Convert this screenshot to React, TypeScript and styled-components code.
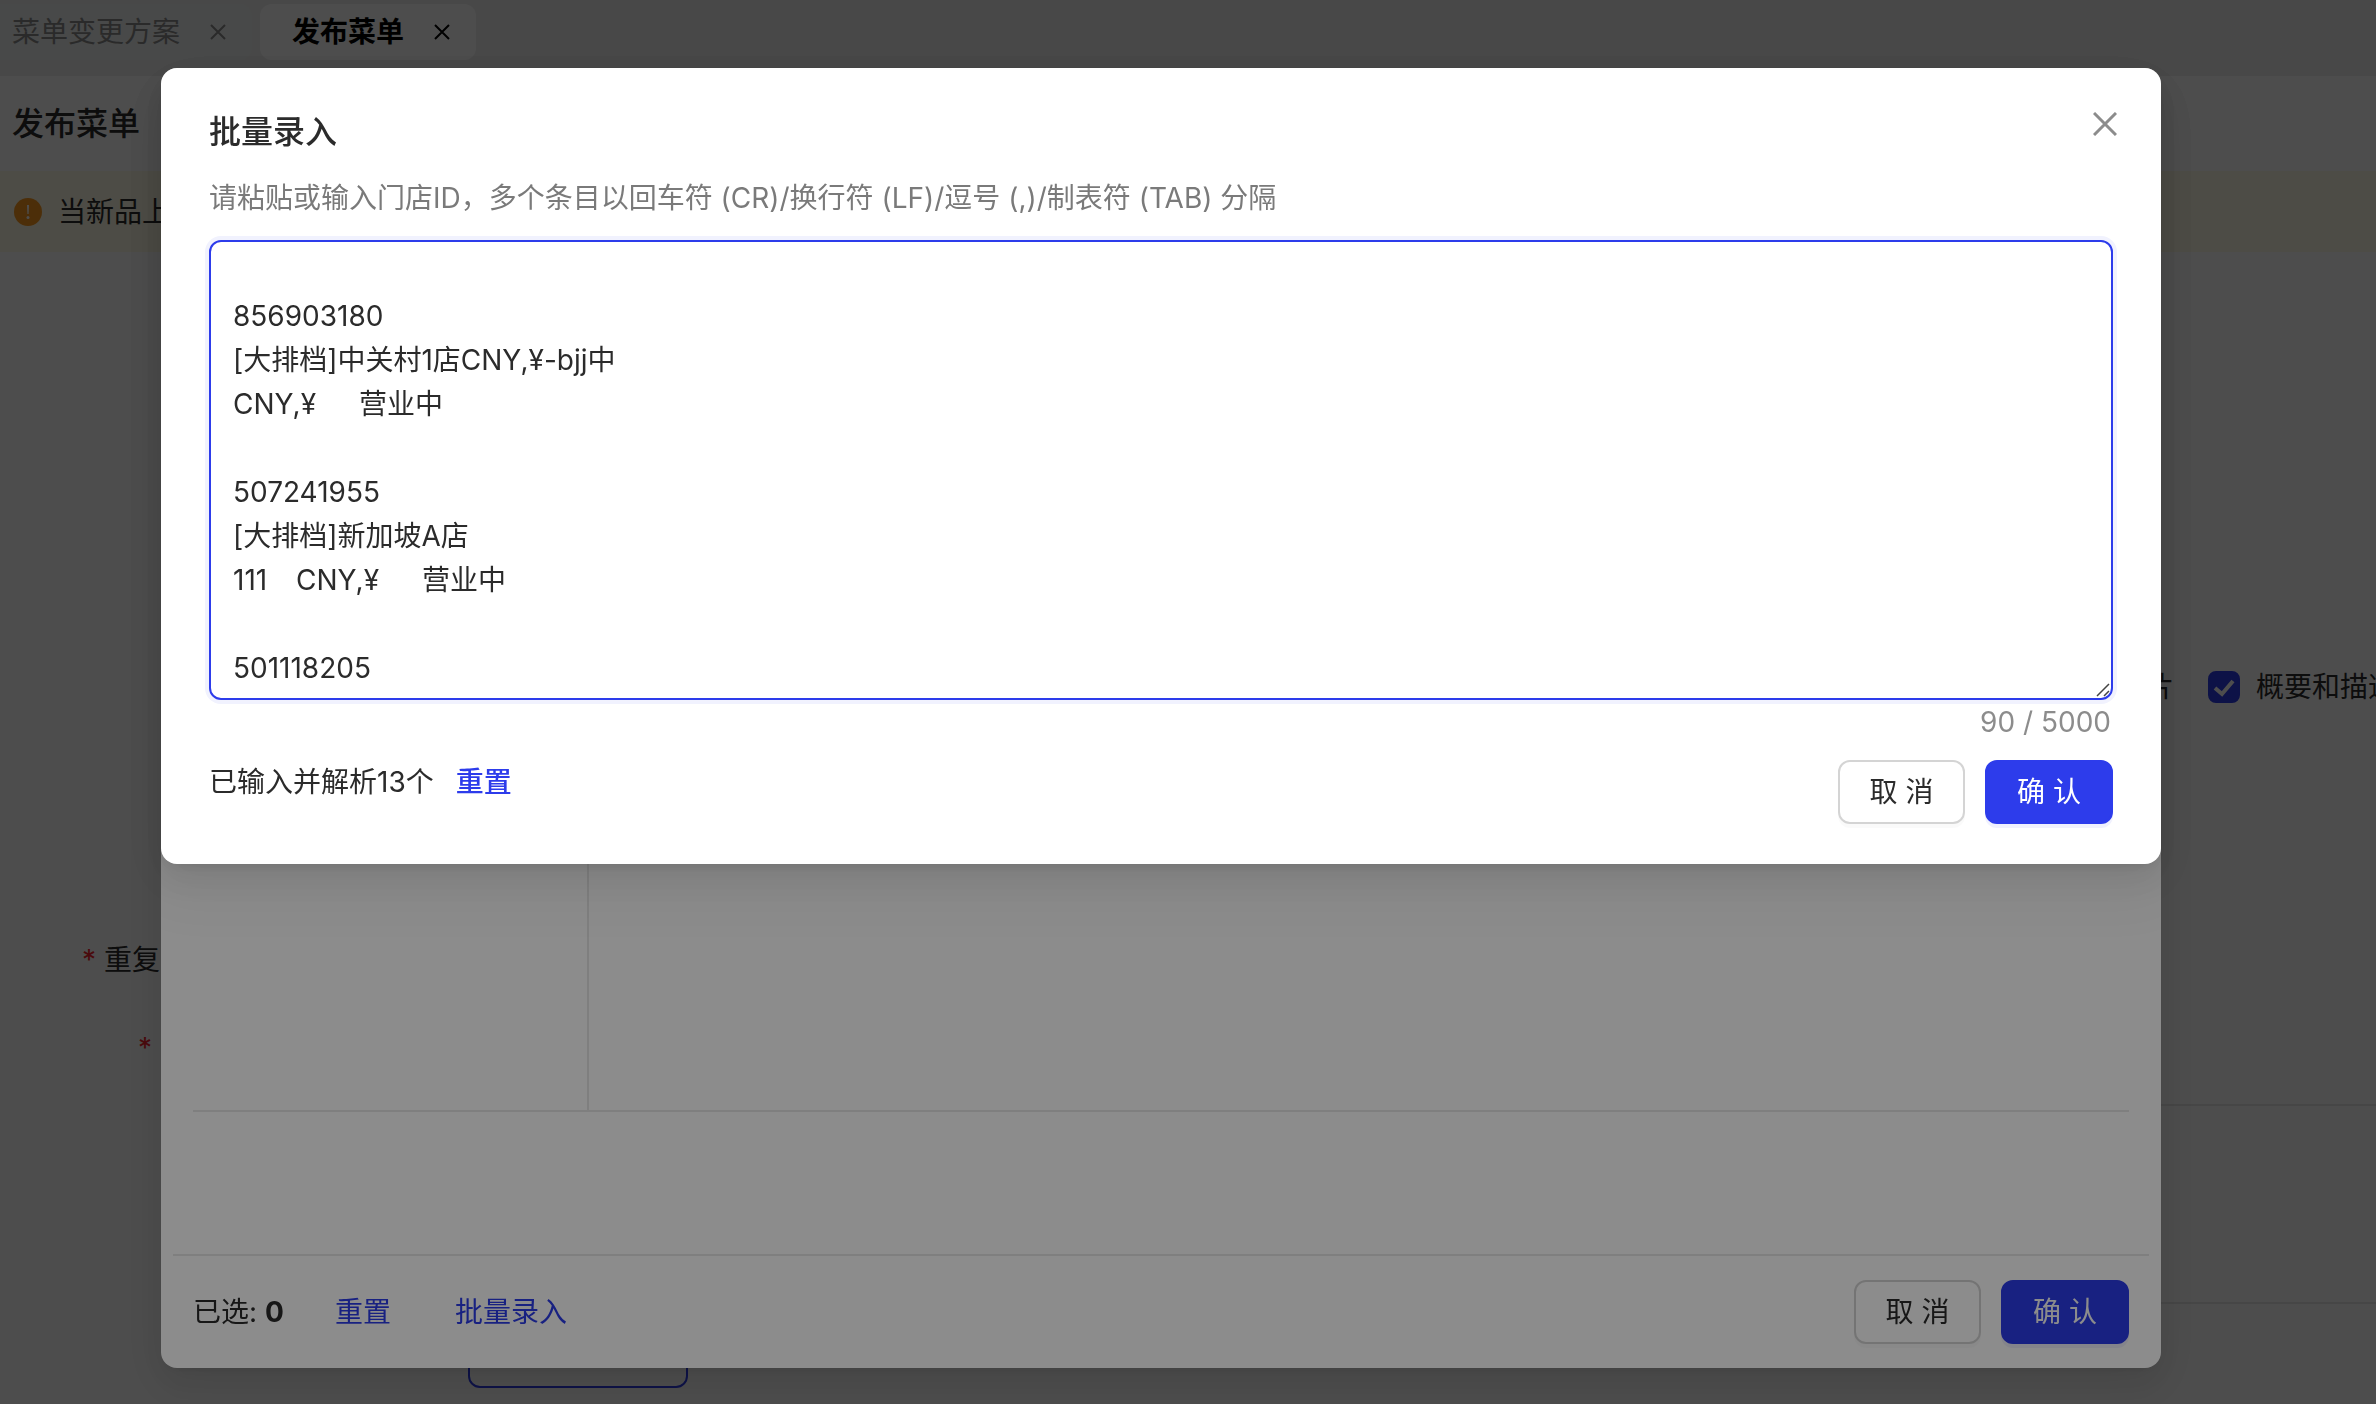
import React, { useState } from "react";
import styled, { createGlobalStyle } from "styled-components";

const BLUE = "#2d3ceb";
const INK = "#2b2b2b";
const LINE = "#e8e8e8";
const MASK = "rgba(0, 0, 0, 0.45)";
const SHADOW =
  "0 12px 32px 0 rgba(0, 0, 0, 0.08), 0 6px 12px -8px rgba(0, 0, 0, 0.12), 0 18px 56px 16px rgba(0, 0, 0, 0.05)";

const GlobalStyle = createGlobalStyle`
  *, *::before, *::after { box-sizing: border-box; }
  body {
    margin: 0;
    color: ${INK};
    background: #fff;
    font: 400 28px/44px Inter, "Noto Sans CJK SC", sans-serif;
  }
  button, textarea { font: inherit; color: inherit; }
`;

/* ---------- page behind the dialogs ---------- */

const Page = styled.div`
  height: 100vh;
  overflow: hidden;
`;

const TabBar = styled.nav`
  display: flex;
  gap: 8px;
  padding: 4px 0 16px;
  background: #efefef;
`;

const Tab = styled.div<{ $active?: boolean }>`
  display: flex;
  align-items: center;
  gap: 30px;
  height: 56px;
  padding: 0 26px 0 ${(p) => (p.$active ? 32 : 12)}px;
  border-radius: ${(p) => (p.$active ? "12px" : "0 12px 12px 0")};
  background: ${(p) => (p.$active ? "#fff" : "#eef1f0")};
  color: ${(p) => (p.$active ? "#000" : "#8c8c8c")};
  font-weight: ${(p) => (p.$active ? 600 : 400)};
`;

const TabClose = styled.button`
  display: flex;
  padding: 0;
  border: 0;
  background: none;
`;

const PageHead = styled.header`
  display: flex;
  align-items: center;
  height: 95px;
  padding: 0 12px;
`;

const PageTitle = styled.h1`
  margin: 0;
  font-size: 32px;
  line-height: 48px;
  font-weight: 500;
`;

const Notice = styled.div`
  display: flex;
  align-items: center;
  gap: 16px;
  height: 81px;
  padding: 0 14px;
  background: #fffbe6;
`;

const OptionRow = styled.div`
  display: flex;
  justify-content: flex-end;
  gap: 34px;
  height: 652px;
  padding-top: 413px;
  margin-right: -20px;
  white-space: nowrap;
`;

const Option = styled.label`
  display: flex;
  align-items: center;
  gap: 16px;
  height: 44px;
`;

const CheckWrap = styled.span`
  position: relative;
  display: flex;
`;

const CheckInput = styled.input`
  appearance: none;
  width: 32px;
  height: 32px;
  margin: 0;
  border: 2px solid #d9d9d9;
  border-radius: 8px;
  background: #fff;
  &:checked {
    border-color: ${BLUE};
    background: ${BLUE};
  }
`;

const CheckMark = styled.svg`
  position: absolute;
  inset: 0;
  pointer-events: none;
`;

const Fields = styled.div`
  height: 200px;
  padding-top: 34px;
`;

const FieldRow = styled.div<{ $indent: number }>`
  display: flex;
  gap: 8px;
  height: 88px;
  padding-left: ${(p) => p.$indent}px;
`;

const Required = styled.span`
  color: #f5222d;
`;

const Band = styled.div`
  height: 200px;
  margin-left: 468px;
  border-top: 2px solid ${LINE};
  border-bottom: 2px solid ${LINE};
`;

const PageActions = styled.div`
  padding: 20px 468px;
`;

const OutlineButton = styled.button`
  width: 220px;
  height: 64px;
  border: 2px solid ${BLUE};
  border-radius: 12px;
  background: #fff;
`;

/* ---------- dialogs ---------- */

const Layer = styled.div`
  position: fixed;
  inset: 0;
  display: flex;
  align-items: flex-start;
  padding: 68px 215px 36px 161px;
  background: ${MASK};
`;

const Dialog = styled.section`
  position: relative;
  display: flex;
  flex-direction: column;
  flex: 1;
  border-radius: 16px;
  background: #fff;
  box-shadow: ${SHADOW};
`;

const PickerDialog = styled(Dialog)`
  align-self: stretch;
`;

const PickerBody = styled.div`
  display: flex;
  flex: 1;
  margin: 0 32px;
  border-bottom: 2px solid ${LINE};
`;

const PickerSide = styled.div`
  width: 396px;
  border-right: 2px solid ${LINE};
`;

const PickerSummary = styled.div`
  height: 144px;
  margin: 0 12px;
  border-bottom: 2px solid ${LINE};
`;

const PickerFooter = styled.footer`
  display: flex;
  align-items: center;
  justify-content: space-between;
  height: 112px;
  padding: 0 32px;
`;

const PickerInfo = styled.div`
  display: flex;
  align-items: center;
`;

const Selected = styled.span`
  width: 142px;
  strong { font-weight: 700; }
`;

const LinkButton = styled.button<{ $strong?: boolean }>`
  padding: 0;
  border: 0;
  background: none;
  color: ${BLUE};
  font-weight: ${(p) => (p.$strong ? 500 : 400)};
  cursor: pointer;
`;

const PickerLinks = styled.div`
  display: flex;
  gap: 64px;
`;

const Actions = styled.div`
  display: flex;
  gap: 20px;
`;

const Button = styled.button<{ $primary?: boolean }>`
  width: ${(p) => (p.$primary ? 128 : 127)}px;
  height: 64px;
  padding: 0;
  border: 2px solid ${(p) => (p.$primary ? BLUE : "#d4d4d4")};
  border-radius: 12px;
  background: ${(p) => (p.$primary ? BLUE : "#fff")};
  color: ${(p) => (p.$primary ? "#fff" : INK)};
  box-shadow: 0 4px 0 ${(p) => (p.$primary ? "rgba(45, 60, 235, 0.07)" : "rgba(0, 0, 0, 0.02)")};
  cursor: pointer;
`;

const EntryDialog = styled(Dialog)`
  padding: 40px 48px;
`;

const EntryTitle = styled.h2`
  margin: 0 0 20px;
  font-size: 32px;
  line-height: 48px;
  font-weight: 500;
`;

const CloseButton = styled.button`
  position: absolute;
  top: 44px;
  right: 44px;
  display: flex;
  padding: 0;
  border: 0;
  background: none;
  color: #8c8c8c;
  cursor: pointer;
`;

const Hint = styled.label`
  margin-bottom: 20px;
  color: #7a7a7a;
`;

const EntryBox = styled.textarea`
  display: block;
  width: 100%;
  height: 460px;
  padding: 8px 22px;
  border: 2px solid ${BLUE};
  border-radius: 12px;
  outline: none;
  overflow: hidden;
  resize: none;
  background: #fff;
  box-shadow: 0 0 0 4px #f1f2fe;
  white-space: pre-wrap;
`;

const BoxFrame = styled.div`
  position: relative;
`;

const Grip = styled.svg`
  position: absolute;
  right: 3px;
  bottom: 3px;
  pointer-events: none;
`;

const Count = styled.div`
  height: 60px;
  padding-right: 2px;
  text-align: right;
  color: #8c8c8c;
`;

const EntryFooter = styled.footer`
  display: flex;
  align-items: flex-start;
  justify-content: space-between;
`;

const Parsed = styled.div`
  display: flex;
  gap: 22px;
`;

const Cross = ({ size, stroke }: { size: number; stroke: number }) => (
  <svg width={size} height={size} viewBox={`0 0 ${size} ${size}`} fill="none" aria-hidden="true">
    <path
      d={`M1 1 L${size - 1} ${size - 1} M${size - 1} 1 L1 ${size - 1}`}
      stroke="currentColor"
      strokeWidth={stroke}
    />
  </svg>
);

const WarnIcon = () => (
  <svg width="28" height="28" viewBox="0 0 28 28" aria-hidden="true">
    <circle cx="14" cy="14" r="14" fill="#fa991e" />
    <path d="M13 7h2l-.4 9h-1.2z" fill="#fff" />
    <circle cx="14" cy="19.5" r="1.5" fill="#fff" />
  </svg>
);

const TABS = [
  { name: "菜单变更方案", active: false },
  { name: "发布菜单", active: true },
];

const STORE_TEXT = [
  "",
  "856903180",
  "[大排档]中关村1店CNY,¥-bjj中",
  "CNY,¥\t营业中",
  "",
  "507241955",
  "[大排档]新加坡A店",
  "111\tCNY,¥\t营业中",
  "",
  "501118205",
].join("\n");

export default function App() {
  const [text, setText] = useState(STORE_TEXT);

  return (
    <>
      <GlobalStyle />
      <Page>
        <TabBar>
          {TABS.map((t) => (
            <Tab key={t.name} $active={t.active}>
              {t.name}
              <TabClose aria-label={`关闭${t.name}`}>
                <Cross size={16} stroke={2} />
              </TabClose>
            </Tab>
          ))}
        </TabBar>
        <PageHead>
          <PageTitle>发布菜单</PageTitle>
        </PageHead>
        <Notice>
          <WarnIcon />
          <span>当新品上</span>
        </Notice>
        <OptionRow>
          <span>片</span>
          <Option>
            <CheckWrap>
              <CheckInput type="checkbox" defaultChecked />
              <CheckMark width="32" height="32" viewBox="0 0 32 32" fill="none">
                <path d="M7 17 L14 23 L25 10" stroke="#fff" strokeWidth="4" />
              </CheckMark>
            </CheckWrap>
            概要和描述
          </Option>
        </OptionRow>
        <Fields>
          <FieldRow $indent={82}>
            <Required>*</Required>
            <span>重复</span>
          </FieldRow>
          <FieldRow $indent={138}>
            <Required>*</Required>
          </FieldRow>
        </Fields>
        <Band />
        <PageActions>
          <OutlineButton aria-label="发布" />
        </PageActions>
      </Page>

      <Layer>
        <PickerDialog>
          <PickerBody>
            <PickerSide />
          </PickerBody>
          <PickerSummary />
          <PickerFooter>
            <PickerInfo>
              <Selected>
                已选: <strong>0</strong>
              </Selected>
              <PickerLinks>
                <LinkButton>重置</LinkButton>
                <LinkButton>批量录入</LinkButton>
              </PickerLinks>
            </PickerInfo>
            <Actions>
              <Button>取 消</Button>
              <Button $primary>确 认</Button>
            </Actions>
          </PickerFooter>
        </PickerDialog>
      </Layer>

      <Layer>
        <EntryDialog role="dialog" aria-labelledby="entry-title">
          <EntryTitle id="entry-title">批量录入</EntryTitle>
          <CloseButton aria-label="关闭">
            <Cross size={24} stroke={3} />
          </CloseButton>
          <Hint htmlFor="entry-box">
            请粘贴或输入门店ID，多个条目以回车符 (CR)/换行符 (LF)/逗号 (,)/制表符 (TAB) 分隔
          </Hint>
          <BoxFrame>
            <EntryBox id="entry-box" value={text} onChange={(e) => setText(e.target.value)} />
            <Grip width="14" height="14" viewBox="0 0 14 14" fill="none">
              <path d="M1 13 L13 1 M8 13 L13 8" stroke="#444" strokeWidth="1.5" />
            </Grip>
          </BoxFrame>
          <Count>90 / 5000</Count>
          <EntryFooter>
            <Parsed>
              <span>已输入并解析13个</span>
              <LinkButton $strong>重置</LinkButton>
            </Parsed>
            <Actions>
              <Button>取 消</Button>
              <Button $primary>确 认</Button>
            </Actions>
          </EntryFooter>
        </EntryDialog>
      </Layer>
    </>
  );
}
